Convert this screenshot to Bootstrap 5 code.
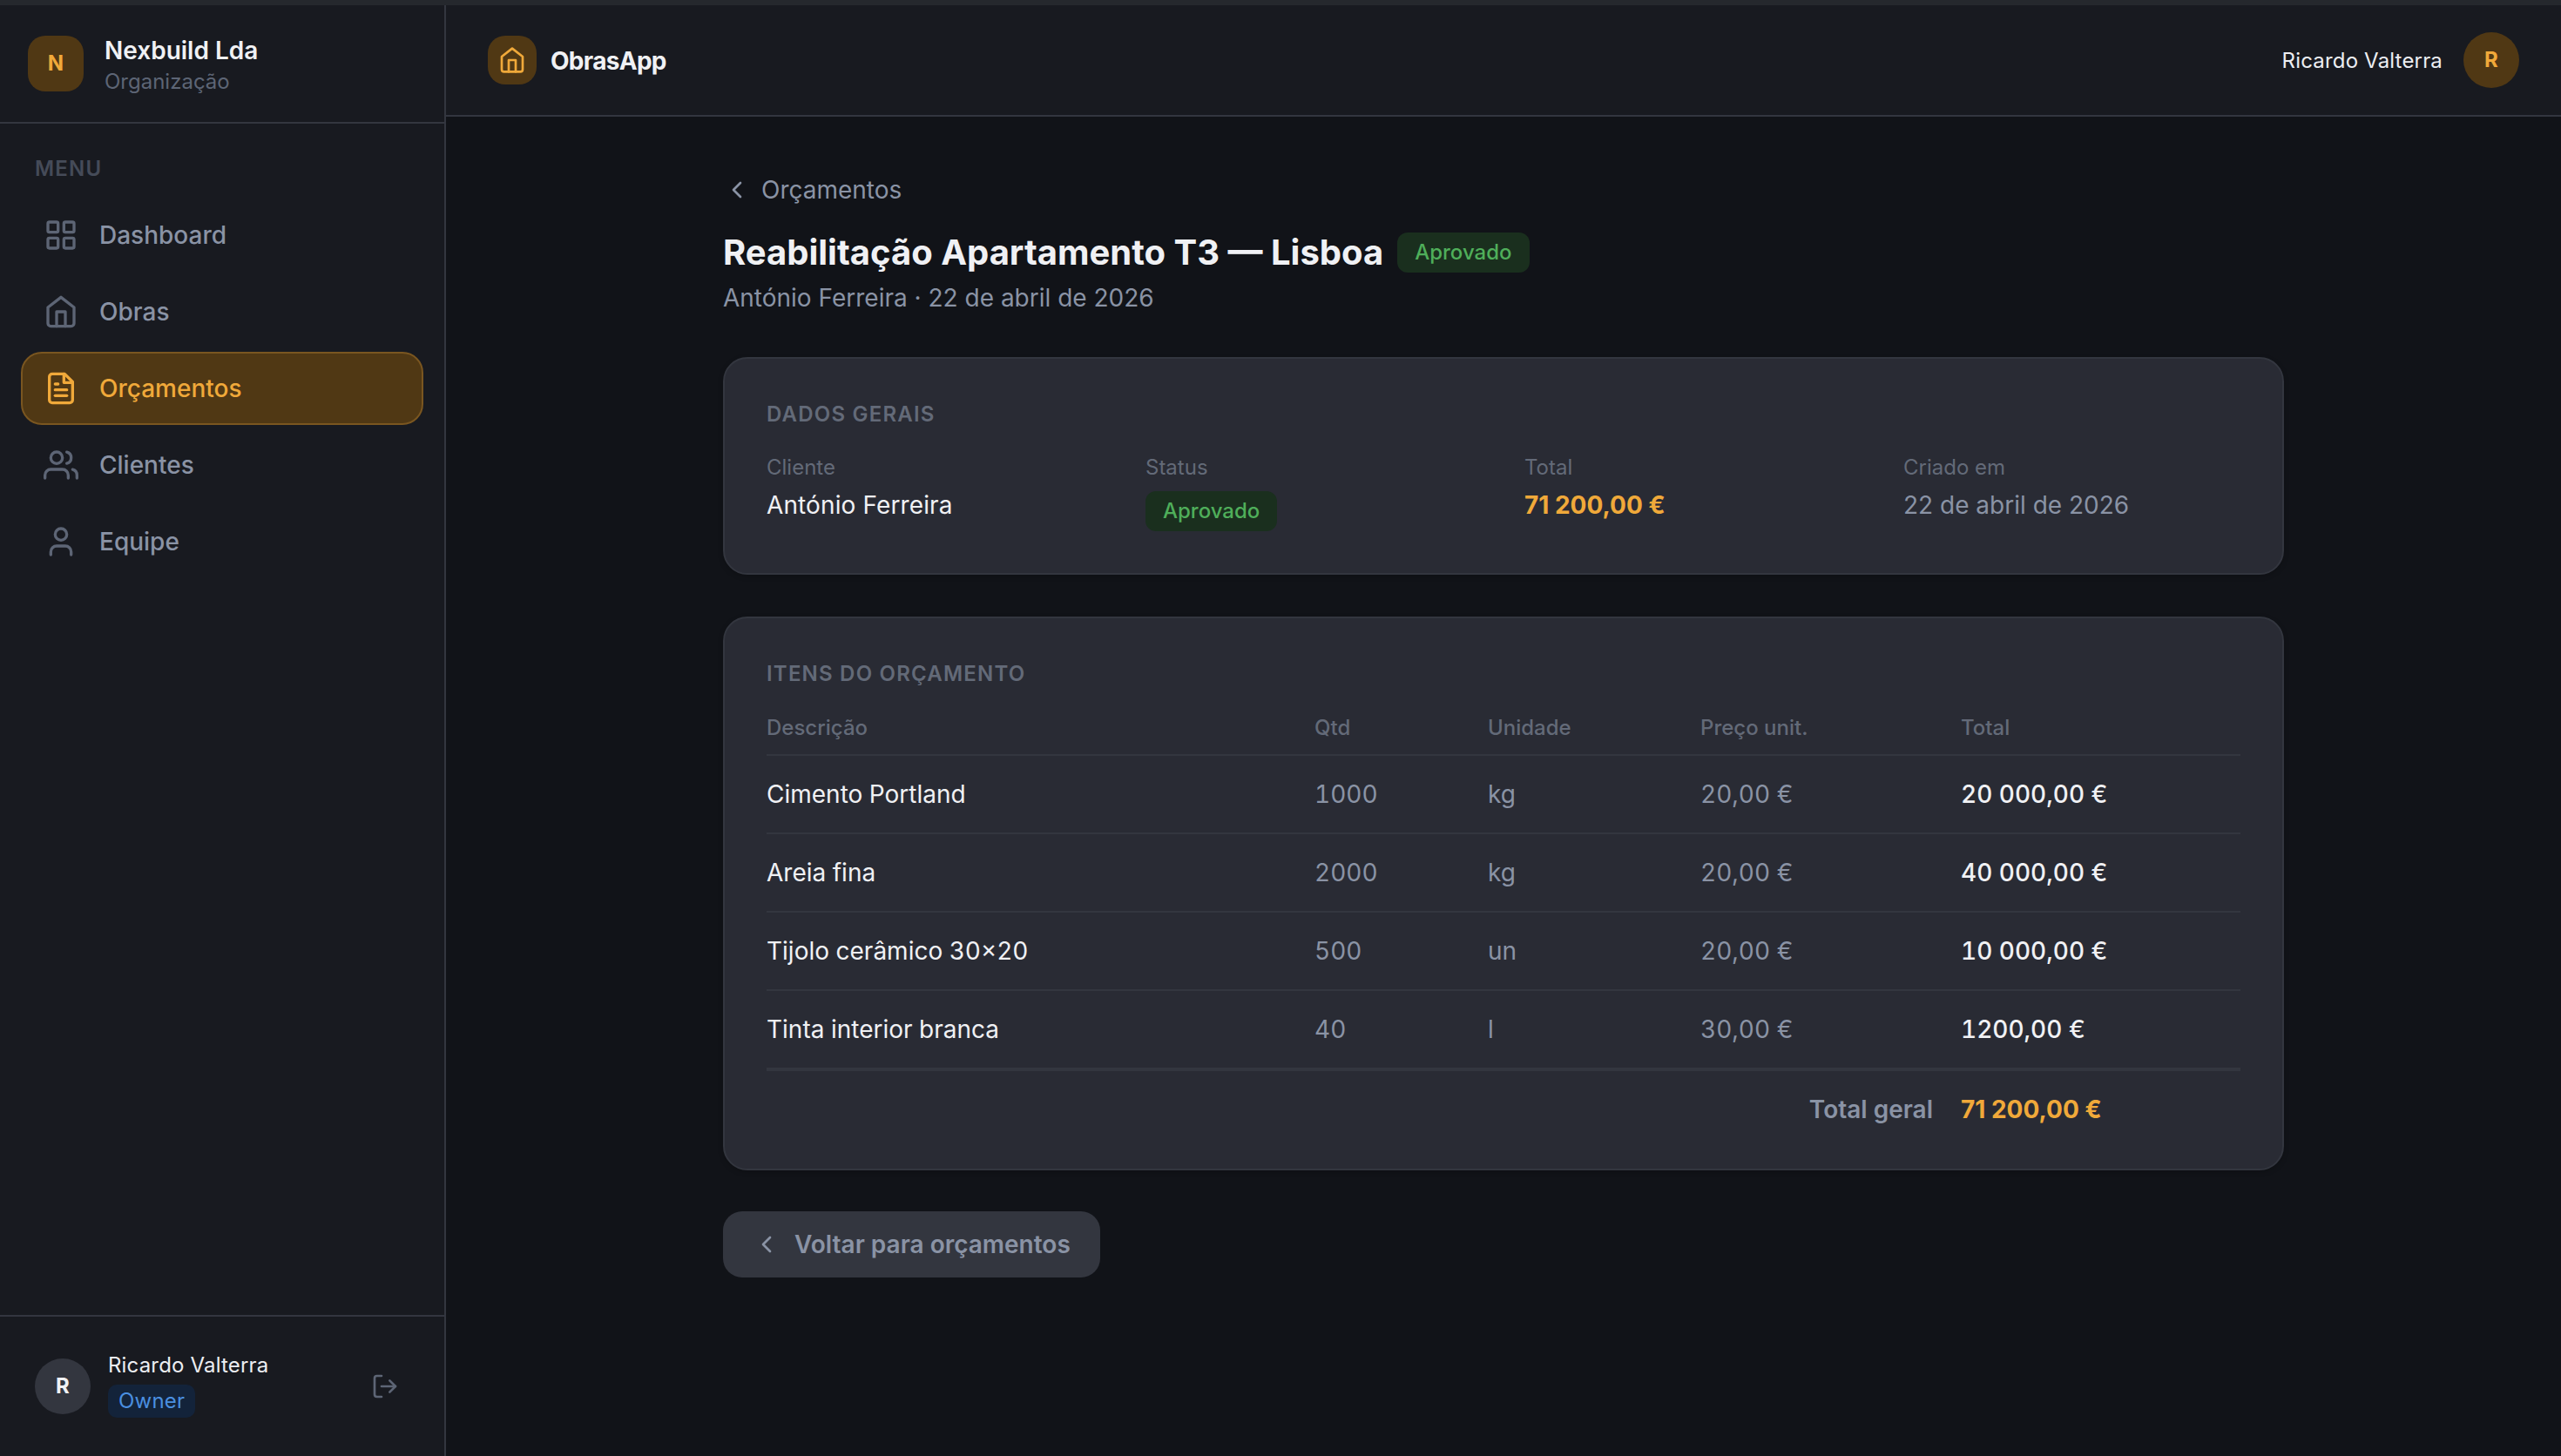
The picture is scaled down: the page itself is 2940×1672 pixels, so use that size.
<!DOCTYPE html>
<html lang="pt">
<head>
<meta charset="utf-8">
<title>ObrasApp</title>
<link rel="stylesheet" href="https://cdn.jsdelivr.net/npm/bootstrap@5.3.0/dist/css/bootstrap.min.css">
<style>
html,body{height:100%}
body{font-family:"Inter","Liberation Sans",sans-serif;background:#111318;color:#f0f1f4;overflow:hidden;font-size:28px}
svg.ico{fill:none;stroke:currentColor;stroke-width:2;stroke-linecap:round;stroke-linejoin:round;flex:none}
.top-strip{height:6px;background:#25282d;flex:none}
.app-shell{height:calc(100vh - 6px)}
.side-col{width:512px;flex:none;background:#181a20;border-right:2px solid #33363f}
.side-head{height:136px;padding:0 32px;gap:24px;border-bottom:2px solid #33363f;flex:none}
.org-logo{width:64px;height:64px;border-radius:20px;background:#503814;color:#f0a93a;font-size:24px;font-weight:700}
.org-text{padding-top:1px}
.org-name{font-size:28px;font-weight:600;line-height:40px;color:#f0f1f4}
.org-sub{font-size:24px;line-height:32px;color:#5d6575}
.menu-cap{font-size:24px;font-weight:600;letter-spacing:1.2px;color:#454b58;line-height:32px;padding:0 40px;margin:36px 0 18px}
.side-nav{padding:0 24px;gap:4px}
.side-link{height:84px;padding:0 24px;gap:24px;border:2px solid transparent;border-radius:24px;color:#8a93a5;font-size:28px;font-weight:500;text-decoration:none}
.side-link svg{width:40px;height:40px;color:#5d6575}
.side-link.on{background:#503814;border-color:#7a5620;color:#f0a93a}
.side-link.on svg{color:#f0a93a}
.side-foot{height:162px;padding:0 52px 0 40px;border-top:2px solid #33363f;gap:20px;flex:none;margin-top:auto}
.user-dot{width:64px;height:64px;border-radius:50%;font-size:24px;font-weight:700;flex:none}
.dot-grey{background:#33363f;color:#f0f1f4}
.dot-amber{background:#503814;color:#f0a93a}
.user-text{margin-bottom:4px}
.user-name{font-size:24px;font-weight:400;letter-spacing:.17px;line-height:32px;color:#eceef2}
.owner-tag{font-size:24px;font-weight:400;letter-spacing:.2px;line-height:38px;height:38px;padding:0 12px;border-radius:10px;background:#13233a;color:#4a8fe0;margin-top:6px}
.out-ico{width:32px;height:32px;color:#5d6575;margin-left:auto}
.main-col{min-width:0;background:#111318}
.top-head{height:128px;padding:0 48px;background:#181a20;border-bottom:2px solid #33363f;flex:none}
.brand-box{width:56px;height:56px;border-radius:20px;background:#503814;color:#f0a93a}
.brand-box svg{width:32px;height:32px}
.brand-name{font-size:28px;font-weight:700;letter-spacing:-.7px;color:#f0f1f4;margin-top:1px}
.head-user{font-size:24px;font-weight:400;letter-spacing:.17px;color:#eceef2;margin-top:1px}
.page-wrap{width:1792px;margin:0 auto;padding-top:62px}
.crumb{font-size:28px;line-height:44px;color:#8a93a5;gap:12px;text-decoration:none;width:fit-content}
.crumb svg{width:32px;height:32px}
.title-row{margin-top:22px}
.page-title{font-size:40px;font-weight:700;line-height:56px;margin:0;color:#f0f1f4}
.state-tag{font-size:24px;font-weight:500;line-height:46px;height:46px;padding:0 20px;border-radius:12px;background:#1a2f1e;color:#4fae5a}
.page-sub{font-size:28px;line-height:40px;color:#8a93a5;margin-top:4px}
.panel{background:#292b34;border:2px solid #33363f;border-radius:28px;padding:48px;box-shadow:0 2px 6px rgba(0,0,0,.2)}
.panel-first{margin-top:48px}
.panel-next{margin-top:48px}
.panel-cap{font-size:24px;font-weight:600;letter-spacing:1.2px;line-height:32px;color:#636a78;text-transform:uppercase}
.info-grid{display:grid;grid-template-columns:repeat(4,1fr);gap:48px;margin-top:29px}
.info-lab{font-size:24px;line-height:32px;color:#636a78}
.info-val{font-size:28px;line-height:40px;color:#f0f1f4;margin-top:7px}
.info-val.strong-val{letter-spacing:.12px}
.info-val.muted-val{color:#8a93a5}
.info-val.tag-val{margin-top:11px;display:flex}
.amber-num{color:#f0a93a;font-weight:700}
.items-tbl{--bs-table-bg:transparent;--bs-table-color:#f0f1f4;margin:30px 0 0;table-layout:fixed;width:100%;color:#f0f1f4;border-collapse:separate;border-spacing:0}
.items-tbl th,.items-tbl td{background:transparent;border-bottom:2px solid #33363f;padding:0 16px;font-size:28px;vertical-align:middle;box-shadow:none}
.items-tbl th{font-size:24px;font-weight:500;color:#636a78;height:48px;padding-bottom:14px;line-height:32px}
.items-tbl td{height:90px;color:#8a93a5;font-variant-numeric:tabular-nums}
.items-tbl th:first-child,.items-tbl td:first-child{padding-left:0;color:#f0f1f4}
.items-tbl th:first-child{color:#636a78}
.items-tbl td.strong-cell{color:#f0f1f4;font-weight:500}
.items-tbl tfoot td{border-bottom:0;border-top:2px solid #33363f;height:66px;padding-top:24px;line-height:40px;font-variant-numeric:normal}
.items-tbl tfoot td.sum-lab{color:#8a93a5;font-weight:600;text-align:right}
.items-tbl tfoot td.amber-num{color:#f0a93a}
.w-a{width:613px}.w-b{width:199px}.w-c{width:244px}.w-d{width:299px}
.back-btn{height:76px;margin-top:47px;padding:0 34px;gap:16px;border-radius:22px;background:#33363f;color:#8a93a5;font-size:28px;font-weight:600;border:0}
.back-btn svg{width:32px;height:32px}
.back-btn:hover{background:#33363f;color:#8a93a5}
</style>
</head>
<body class="d-flex flex-column">
<div class="top-strip"></div>
<div class="app-shell d-flex">
  <aside class="side-col d-flex flex-column">
    <div class="side-head d-flex align-items-center">
      <div class="org-logo d-flex align-items-center justify-content-center">N</div>
      <div class="org-text">
        <div class="org-name">Nexbuild Lda</div>
        <div class="org-sub">Organização</div>
      </div>
    </div>
    <div class="menu-cap">MENU</div>
    <nav class="side-nav nav flex-column">
      <a class="side-link d-flex align-items-center" href="#"><svg class="ico" viewBox="0 0 24 24"><rect x="3" y="3" width="7" height="7" rx="1"/><rect x="14" y="3" width="7" height="7" rx="1"/><rect x="14" y="14" width="7" height="7" rx="1"/><rect x="3" y="14" width="7" height="7" rx="1"/></svg>Dashboard</a>
      <a class="side-link d-flex align-items-center" href="#"><svg class="ico" viewBox="0 0 24 24"><path d="m3 9 9-7 9 7v11a2 2 0 0 1-2 2H5a2 2 0 0 1-2-2z"/><path d="M9 22V12h6v10"/></svg>Obras</a>
      <a class="side-link on d-flex align-items-center" href="#"><svg class="ico" viewBox="0 0 24 24"><path d="M14.5 2H6a2 2 0 0 0-2 2v16a2 2 0 0 0 2 2h12a2 2 0 0 0 2-2V7.5z"/><path d="M14 2v6h6"/><path d="M16 13H8"/><path d="M16 17H8"/><path d="M10 9H8"/></svg>Orçamentos</a>
      <a class="side-link d-flex align-items-center" href="#"><svg class="ico" viewBox="0 0 24 24"><path d="M17 21v-2a4 4 0 0 0-4-4H5a4 4 0 0 0-4 4v2"/><circle cx="9" cy="7" r="4"/><path d="M23 21v-2a4 4 0 0 0-3-3.87"/><path d="M16 3.13a4 4 0 0 1 0 7.75"/></svg>Clientes</a>
      <a class="side-link d-flex align-items-center" href="#"><svg class="ico" viewBox="0 0 24 24"><path d="M19 21v-2a4 4 0 0 0-4-4H9a4 4 0 0 0-4 4v2"/><circle cx="12" cy="7" r="4"/></svg>Equipe</a>
    </nav>
    <div class="side-foot d-flex align-items-center">
      <div class="user-dot dot-grey d-flex align-items-center justify-content-center">R</div>
      <div class="user-text d-flex flex-column align-items-start">
        <div class="user-name">Ricardo Valterra</div>
        <div class="owner-tag">Owner</div>
      </div>
      <svg class="ico out-ico" viewBox="0 0 24 24"><path d="M9 21H5a2 2 0 0 1-2-2V5a2 2 0 0 1 2-2h4"/><path d="m16 17 5-5-5-5"/><path d="M21 12H9"/></svg>
    </div>
  </aside>
  <div class="main-col flex-grow-1 d-flex flex-column">
    <header class="top-head d-flex align-items-center justify-content-between">
      <div class="d-flex align-items-center gap-3">
        <div class="brand-box d-flex align-items-center justify-content-center"><svg class="ico" viewBox="0 0 24 24"><path d="m3 9 9-7 9 7v11a2 2 0 0 1-2 2H5a2 2 0 0 1-2-2z"/><path d="M9 22V12h6v10"/></svg></div>
        <div class="brand-name">ObrasApp</div>
      </div>
      <div class="d-flex align-items-center gap-4">
        <div class="head-user">Ricardo Valterra</div>
        <div class="user-dot dot-amber d-flex align-items-center justify-content-center">R</div>
      </div>
    </header>
    <main class="page-wrap">
      <a class="crumb d-flex align-items-center" href="#"><svg class="ico" viewBox="0 0 24 24"><path d="m15 18-6-6 6-6"/></svg>Orçamentos</a>
      <div class="title-row d-flex align-items-center gap-3">
        <h1 class="page-title">Reabilitação Apartamento T3 — Lisboa</h1>
        <span class="state-tag">Aprovado</span>
      </div>
      <div class="page-sub">António Ferreira · 22 de abril de 2026</div>
      <section class="panel panel-first">
        <div class="panel-cap">Dados gerais</div>
        <div class="info-grid">
          <div><div class="info-lab">Cliente</div><div class="info-val strong-val">António Ferreira</div></div>
          <div><div class="info-lab">Status</div><div class="info-val tag-val"><span class="state-tag">Aprovado</span></div></div>
          <div><div class="info-lab">Total</div><div class="info-val amber-num">71 200,00 €</div></div>
          <div><div class="info-lab">Criado em</div><div class="info-val muted-val">22 de abril de 2026</div></div>
        </div>
      </section>
      <section class="panel panel-next">
        <div class="panel-cap">Itens do orçamento</div>
        <table class="table items-tbl">
          <colgroup><col class="w-a"><col class="w-b"><col class="w-c"><col class="w-d"><col></colgroup>
          <thead><tr><th>Descrição</th><th>Qtd</th><th>Unidade</th><th>Preço unit.</th><th>Total</th></tr></thead>
          <tbody>
            <tr><td>Cimento Portland</td><td>1000</td><td>kg</td><td>20,00 €</td><td class="strong-cell">20 000,00 €</td></tr>
            <tr><td>Areia fina</td><td>2000</td><td>kg</td><td>20,00 €</td><td class="strong-cell">40 000,00 €</td></tr>
            <tr><td>Tijolo cerâmico 30×20</td><td>500</td><td>un</td><td>20,00 €</td><td class="strong-cell">10 000,00 €</td></tr>
            <tr><td>Tinta interior branca</td><td>40</td><td>l</td><td>30,00 €</td><td class="strong-cell">1200,00 €</td></tr>
          </tbody>
          <tfoot><tr><td colspan="4" class="sum-lab">Total geral</td><td class="amber-num">71 200,00 €</td></tr></tfoot>
        </table>
      </section>
      <button type="button" class="btn back-btn d-inline-flex align-items-center"><svg class="ico" viewBox="0 0 24 24"><path d="m15 18-6-6 6-6"/></svg>Voltar para orçamentos</button>
    </main>
  </div>
</div>
<script src="https://cdn.jsdelivr.net/npm/bootstrap@5.3.0/dist/js/bootstrap.bundle.min.js"></script>
</body>
</html>
